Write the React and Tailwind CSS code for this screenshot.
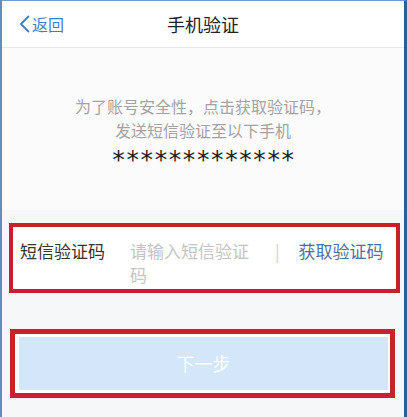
import React from 'react';

const cjk = { fontFamily: '"Noto Sans CJK SC", "Noto Sans", sans-serif' };

const BackChevron = () => (
  <svg width="11" height="18" viewBox="0 0 11 18" fill="none">
    <path d="M9.5 1.5 L2 9 L9.5 16.5" stroke="#3f7ecb" strokeWidth="1.8" strokeLinecap="round" strokeLinejoin="round" />
  </svg>
);

export default function App() {
  return (
    <div
      className="w-[407px] h-[417px] overflow-hidden flex flex-col bg-[#f6f7f9] border-l-2 border-t border-r-[3px] border-l-[#5b8fc6] border-t-[#6b9bd0] border-r-[#2f5f92]"
      style={cjk}
    >
      <header className="h-[47px] shrink-0 bg-white border-b border-[#e7e8ea] flex items-center relative">
        <div className="absolute left-[17px] top-0 h-full flex items-center gap-[2px] text-[16px] text-[#3f7ecb]">
          <BackChevron />
          <span>返回</span>
        </div>
        <h1 className="w-full text-center text-[18px] text-[#222] font-normal">手机验证</h1>
      </header>

      <section className="h-[162px] shrink-0 bg-[#fbfbfc] flex flex-col items-center pt-[46px]">
        <p className="text-[16px] leading-[24px] text-[#a3a3a3] text-center">
          为了账号安全性，点击获取验证码，
          <br />
          发送短信验证至以下手机
        </p>
        <p
          className="mt-[4px] pl-[2px] text-[25px] leading-[28px] text-[#1e1e1e] tracking-[1.6px]"
          style={{ fontFamily: '"DejaVu Sans", sans-serif' }}
        >
          *************
        </p>
      </section>

      <div className="mt-[13px] ml-[7px] mr-[4px] h-[70px] border-4 border-[#c71f2d] bg-white flex items-start pt-[12px] pl-[7px]">
        <span className="w-[110px] shrink-0 text-[17px] leading-[24px] text-[#333]">短信验证码</span>
        <span className="w-[128px] shrink-0 text-[17px] leading-[24px] text-[#c4c4c4]">请输入短信验证码</span>
        <span className="ml-[17px] text-[17px] leading-[24px] text-[#d2d2d2]">|</span>
        <span className="ml-[19px] text-[17px] leading-[24px] text-[#4d709b]">获取验证码</span>
      </div>

      <div className="mt-[36px] ml-[8px] mr-[9px] h-[69px] border-[5px] border-[#c8222f] bg-white pt-[3px] pb-[3px] pl-[4px] pr-[2px]">
        <button
          type="button"
          className="w-full h-full bg-[#d3e6fa] text-white text-[18px] flex items-center justify-center"
        >
          下一步
        </button>
      </div>
    </div>
  );
}
